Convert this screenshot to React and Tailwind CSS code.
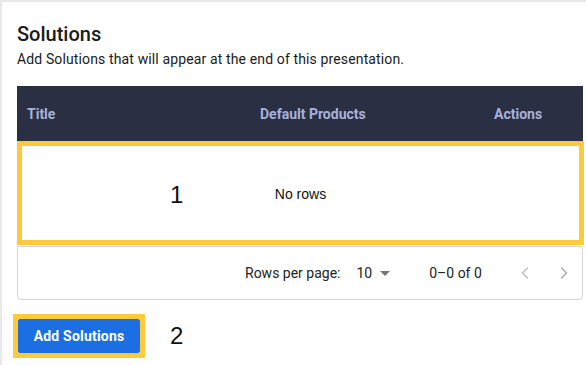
import React from 'react'
import { ChevronLeft, ChevronRight } from 'lucide-react'

const App = () => {
    return (
        <div className="w-[586px] h-[365px] overflow-hidden bg-white border-t-2 border-l-2 border-[#e8e8e8] font-['Roboto',sans-serif] text-[#1c1c1c]">
            <div className="pl-[15px] pt-[19px]">
                {/* Heading */}
                <h1 className="text-[20px] leading-[26px] font-medium text-[#1a1a1a]">Solutions</h1>
                <p className="mt-[3px] text-[14px] leading-[18px] tracking-[0.13px] text-[#1a1a1a]">
                    Add Solutions that will appear at the end of this presentation.
                </p>

                {/* Table */}
                <div className="mt-[18px] w-[567px]">
                    <div className="flex items-center h-[55px] w-[566px] bg-[#2b2f44] text-[14px] font-bold text-[#a8b1d8] pl-[10px] pt-[2px]">
                        <div className="w-[233px]">Title</div>
                        <div className="w-[234px]">Default Products</div>
                        <div>Actions</div>
                    </div>

                    {/* Highlighted body */}
                    <div className="relative flex items-center justify-center h-[104px] w-[567px] border-[5px] border-[#fdca3c] bg-white">
                        <span className="absolute left-[148px] top-[35px] text-[24px] leading-[28px] font-['Liberation_Sans',sans-serif] text-[#111]">1</span>
                        <span className="text-[14px] font-['Liberation_Sans',sans-serif] text-[#111] mt-[2px]">No rows</span>
                    </div>

                    {/* Pagination */}
                    <div className="w-[566px] h-[54px] border-x border-b border-t border-[#d6d6d6] rounded-b-[4px] flex items-center text-[14px] text-[#222] mt-[1px]">
                        <span className="ml-[227px]">Rows per page:</span>
                        <span className="ml-[16px] flex items-center">
                            10
                            <svg width="10" height="5" viewBox="0 0 10 5" className="ml-[8px]">
                                <path d="M0 0 L10 0 L5 5 Z" fill="#757575" />
                            </svg>
                        </span>
                        <span className="ml-[39px]">0–0 of 0</span>
                        <ChevronLeft className="ml-[33px] w-[20px] h-[20px] text-[#bdbdbd]" strokeWidth={1.6} />
                        <ChevronRight className="ml-[19px] w-[20px] h-[20px] text-[#a8a8a8]" strokeWidth={1.6} />
                    </div>
                </div>

                {/* Button row */}
                <div className="flex items-center mt-[14px] -ml-[4px]">
                    <div className="border-[5px] border-[#fdca3c]">
                        <button className="h-[34px] w-[122px] rounded-[2px] bg-[#1b6fe2] text-white text-[14px] font-bold tracking-[0.2px]">
                            Add Solutions
                        </button>
                    </div>
                    <span className="ml-[25px] text-[24px] leading-[28px] font-['Liberation_Sans',sans-serif] text-[#111]">2</span>
                </div>
            </div>
        </div>
    )
}

export default App
